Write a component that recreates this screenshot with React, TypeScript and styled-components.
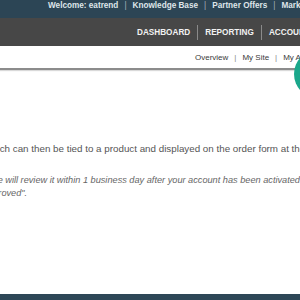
import React from "react";
import styled, { createGlobalStyle } from "styled-components";

const Global = createGlobalStyle`
  html, body { margin: 0; padding: 0; background: #fff; }
  body { width: 300px; height: 300px; overflow: hidden; font-family: "Liberation Sans", Arial, sans-serif; }
`;

const Page = styled.div`
  position: relative;
  width: 300px;
  height: 300px;
  overflow: hidden;
`;

const TopBar = styled.div`
  height: 18px;
  background: #2c4555;
  color: #dfe5ea;
  font-size: 8.2px;
  font-weight: bold;
  line-height: 12px;
  padding-left: 48px;
  display: flex;
  white-space: nowrap;
`;

const TopSep = styled.span`
  margin: 0 6px 0 6px;
  color: #aab4bc;
  font-weight: normal;
`;

const NavBar = styled.div`
  height: 28px;
  background: #474747;
  display: flex;
  align-items: center;
  padding-left: 130px;
  white-space: nowrap;
`;

const NavItem = styled.div<{ $first?: boolean }>`
  height: 15px;
  line-height: 15px;
  padding: 0 7px;
  font-size: 8.2px;
  font-weight: bold;
  color: #f2f2f2;
  border-left: ${(p) => (p.$first ? "none" : "1px solid #8a8a8a")};
`;

const SubNav = styled.div`
  box-sizing: border-box;
  height: 24px;
  padding: 6px 0 0 195px;
  border-bottom: 2px solid #8c8c8c;
  box-shadow: 0 1px 1px rgba(0, 0, 0, 0.15);
  display: flex;
  white-space: nowrap;
  font-size: 8px;
  line-height: 12px;
  color: #3a3a3a;
`;

const SubSep = styled.span`
  margin: 0 6px;
  color: #888;
`;

const Content = styled.div`
  display: flex;
  flex-direction: column;
  margin-left: -15px;
  width: 700px;
  padding-top: 73px;
`;

const Intro = styled.p`
  margin: 0;
  font-size: 9.8px;
  line-height: 12px;
  color: #555;
  white-space: nowrap;
`;

const Note = styled.p`
  margin: 19px 0 0 -2px;
  font-size: 9.2px;
  line-height: 12.5px;
  font-style: italic;
  color: #666;
  white-space: nowrap;
`;

const Table = styled.div`
  margin-top: 95px;
  width: 800px;
`;

const HeadRow = styled.div`
  height: 16px;
  background: #2e4757;
  display: grid;
  grid-template-columns: 58px 118px 194px 1fr;
  align-items: center;
`;

const HeadCell = styled.div`
  text-align: center;
  font-size: 8px;
  font-weight: bold;
  color: #e4e9ee;
`;

const BodyRow = styled.div`
  height: 10px;
  border-bottom: 1px solid #c9c9c9;
  background: #fff;
`;

const Footer = styled.div`
  height: 20px;
  background: #efefef;
`;

const Fab = styled.div`
  position: absolute;
  left: 294px;
  top: 50px;
  width: 48px;
  height: 48px;
  border-radius: 50%;
  background: #1aa78b;
`;

export default function App() {
  return (
    <Page>
      <Global />
      <TopBar>
        <span>Welcome: eatrend</span>
        <TopSep>|</TopSep>
        <span>Knowledge Base</span>
        <TopSep>|</TopSep>
        <span>Partner Offers</span>
        <TopSep>|</TopSep>
        <span>Marketplace</span>
      </TopBar>
      <NavBar>
        <NavItem $first>DASHBOARD</NavItem>
        <NavItem>REPORTING</NavItem>
        <NavItem>ACCOUNT</NavItem>
      </NavBar>
      <SubNav>
        <span>Overview</span>
        <SubSep>|</SubSep>
        <span>My Site</span>
        <SubSep>|</SubSep>
        <span>My Account</span>
      </SubNav>
      <Content>
        <Intro>
          which can then be tied to a product and displayed on the order form at the time of purchase.
        </Intro>
        <Note>
          * We will review it within 1 business day after your account has been activated. Images will be marked as
          <br />
          approved".
        </Note>
        <Table>
          <HeadRow>
            <HeadCell />
            <HeadCell>File Name</HeadCell>
            <HeadCell>Alt Tag</HeadCell>
            <HeadCell>Actions</HeadCell>
          </HeadRow>
          <BodyRow />
          <Footer />
        </Table>
      </Content>
      <Fab />
    </Page>
  );
}
